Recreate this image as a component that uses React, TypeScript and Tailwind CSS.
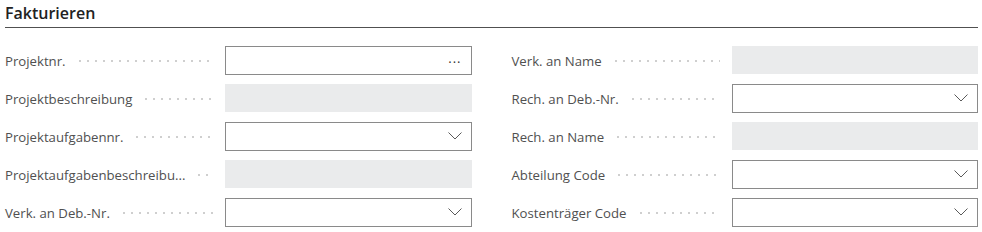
import React from "react";

type Field = { label: string; kind: "lookup" | "select" | "readonly" };

const left: Field[] = [
  { label: "Projektnr.", kind: "lookup" },
  { label: "Projektbeschreibung", kind: "readonly" },
  { label: "Projektaufgabennr.", kind: "select" },
  { label: "Projektaufgabenbeschreibu...", kind: "readonly" },
  { label: "Verk. an Deb.-Nr.", kind: "select" },
];

const right: Field[] = [
  { label: "Verk. an Name", kind: "readonly" },
  { label: "Rech. an Deb.-Nr.", kind: "select" },
  { label: "Rech. an Name", kind: "readonly" },
  { label: "Abteilung Code", kind: "select" },
  { label: "Kostenträger Code", kind: "select" },
];

function Chevron() {
  return (
    <svg width="14" height="8" viewBox="0 0 14 8" fill="none" className="text-[#5a5a5a]">
      <polyline points="0.5,0.5 7,7 13.5,0.5" stroke="currentColor" strokeWidth="1" />
    </svg>
  );
}

function Row({ field }: { field: Field }) {
  return (
    <div className="flex h-[28px] items-center">
      <div className="flex w-[220px] shrink-0 items-center pr-[12px] pt-[3px]">
        <span className="whitespace-nowrap text-[13.2px] text-[#505050]">{field.label}</span>
        <span className="ml-[10px] h-[2px] flex-1 bg-[radial-gradient(circle,#cfcfcf_0.9px,transparent_1px)] bg-[length:8px_2px] bg-left" />
      </div>
      {field.kind === "readonly" ? (
        <div className="h-[28px] flex-1 bg-[#eaebec]" />
      ) : (
        <div className="flex h-[29px] flex-1 items-center justify-end border border-[#8a8a8a] bg-white pr-[9px]">
          {field.kind === "lookup" ? (
            <span className="mb-[4px] text-[13px] leading-none tracking-[1px] text-[#333]">...</span>
          ) : (
            <Chevron />
          )}
        </div>
      )}
    </div>
  );
}

export default function App() {
  return (
    <div className="h-[232px] w-[982px] bg-white pl-[5px] pr-[4px] pt-[2px] font-['Open_Sans',sans-serif]">
      <div className="border-b border-[#505050] pb-[3px]">
        <h2 className="text-[16px] font-semibold leading-[22px] text-[#222]">Fakturieren</h2>
      </div>
      <div className="mt-[18px] grid grid-cols-2 gap-x-[40px]">
        <div className="flex flex-col gap-[10px]">
          {left.map((f) => (
            <Row key={f.label} field={f} />
          ))}
        </div>
        <div className="flex flex-col gap-[10px]">
          {right.map((f) => (
            <Row key={f.label} field={f} />
          ))}
        </div>
      </div>
    </div>
  );
}
